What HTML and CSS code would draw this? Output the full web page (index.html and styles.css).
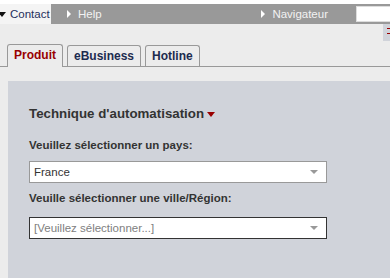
FILE: index.html
```html
<!DOCTYPE html>
<html>
<head>
  <title>Produit</title>
  <link rel="stylesheet" href="styles.css">
</head>
<body>
  <div class="topbar">
    <div class="contact"><span class="tri-down"></span>Contact</div>
    <div class="navbar">
      <span class="nav-link help"><span class="tri-right"></span>Help</span>
      <span class="nav-link navig"><span class="tri-right"></span>Navigateur</span>
      <span class="search"></span>
    </div>
  </div>
  <div class="side-tab"><span></span><span></span></div>
  <div class="tabs">
    <div class="tab active">Produit</div>
    <div class="tab">eBusiness</div>
    <div class="tab">Hotline</div>
  </div>
  <div class="panel">
    <h4 class="panel-title">Technique d'automatisation<span class="tri-red"></span></h4>
    <label class="field-label">Veuillez sélectionner un pays:</label>
    <div class="select">France<span class="arrow"></span></div>
    <label class="field-label second">Veuille sélectionner une ville/Région:</label>
    <div class="select focus placeholder">[Veuillez sélectionner...]<span class="arrow"></span></div>
  </div>
</body>
</html>
```

FILE: styles.css
```css
body {
  margin: 0;
  background: #ececec;
  font-family: "Liberation Sans", Arial, sans-serif;
  font-size: 12px;
  color: #333;
  overflow: hidden;
  position: relative;
  height: 278px;
}

.topbar {
  display: flex;
  height: 24px;
  background: #fff;
  padding-top: 4px;
  box-sizing: border-box;
}

.contact {
  width: 51px;
  display: flex;
  align-items: center;
  color: #1f2f5c;
  font-size: 11.5px;
  background: #f4f4f4;
}

.tri-down {
  width: 0;
  height: 0;
  border-left: 4px solid transparent;
  border-right: 4px solid transparent;
  border-top: 5px solid #111;
  margin: 0 4px 0 -2px;
}

.navbar {
  flex: 1;
  display: flex;
  align-items: center;
  background: #999;
  color: #f2f2f2;
  font-size: 11.5px;
}

.nav-link {
  display: flex;
  align-items: center;
}

.help {
  margin-left: 16px;
}

.navig {
  margin-left: auto;
}

.tri-right {
  width: 0;
  height: 0;
  border-top: 4px solid transparent;
  border-bottom: 4px solid transparent;
  border-left: 4px solid #fff;
  margin-right: 7px;
}

.search {
  width: 33px;
  height: 14px;
  margin-left: 28px;
  background: #fff;
  border: 1px solid #ddd;
  border-right: 0;
}

.side-tab {
  position: absolute;
  right: 0;
  top: 24px;
  width: 7px;
  height: 17px;
  background: #d0d3da;
}

.side-tab span {
  display: block;
  width: 3px;
  height: 1px;
  background: #900;
  margin: 4px 0 0 4px;
}

.tabs {
  display: flex;
  gap: 4px;
  padding: 21px 0 0 7px;
  border-bottom: 1px solid #999;
  height: 21px;
}

.tab {
  padding: 0 6px;
  line-height: 20px;
  border: 1px solid #999;
  border-bottom: 0;
  border-radius: 3px 3px 0 0;
  font-weight: bold;
  font-size: 12px;
  color: #1c2b4f;
}

.tab.active {
  color: #990000;
  background: #ececec;
  height: 22px;
  margin-top: -1px;
}

.panel {
  margin: 14px 0 0 8px;
  background: #d0d3da;
  padding: 25px 21px 0;
  height: 172px;
}

.panel-title {
  margin: 0 0 16px;
  font-size: 13.3px;
  line-height: 16px;
  font-weight: bold;
  color: #333;
  display: flex;
  align-items: center;
}

.tri-red {
  width: 0;
  height: 0;
  border-left: 4px solid transparent;
  border-right: 4px solid transparent;
  border-top: 5px solid #990000;
  margin-left: 3px;
}

.field-label {
  display: block;
  font-weight: bold;
  font-size: 11.5px;
  line-height: 14px;
  margin-bottom: 9px;
}

.field-label.second {
  margin-bottom: 12px;
}

.select {
  width: 298px;
  height: 22px;
  box-sizing: border-box;
  border: 1px solid #999;
  background: #fff;
  display: flex;
  align-items: center;
  padding-left: 4px;
  margin-bottom: 8px;
  font-size: 11.5px;
}

.select.focus {
  border-color: #333;
}

.placeholder {
  color: #808080;
}

.arrow {
  margin-left: auto;
  margin-right: 8px;
  width: 0;
  height: 0;
  border-left: 4px solid transparent;
  border-right: 4px solid transparent;
  border-top: 4px solid #999;
}
```
